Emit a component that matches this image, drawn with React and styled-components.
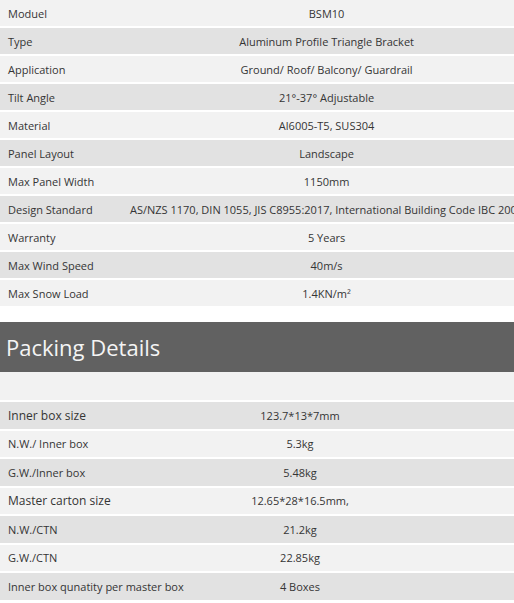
import styled, { createGlobalStyle } from "styled-components";

const GlobalStyle = createGlobalStyle`
  html, body {
    margin: 0;
    padding: 0;
    overflow: hidden;
    background: #fff;
  }
  body {
    font-family: "Open Sans", "Liberation Sans", sans-serif;
    color: #353535;
  }
`;

const specs = [
  ["Moduel", "BSM10"],
  ["Type", "Aluminum Profile Triangle Bracket"],
  ["Application", "Ground/ Roof/ Balcony/ Guardrail"],
  ["Tilt Angle", "21°-37° Adjustable"],
  ["Material", "Al6005-T5, SUS304"],
  ["Panel Layout", "Landscape"],
  ["Max Panel Width", "1150mm"],
  [
    "Design Standard",
    "AS/NZS 1170, DIN 1055, JIS C8955:2017, International Building Code IBC 2009",
  ],
  ["Warranty", "5 Years"],
  ["Max Wind Speed", "40m/s"],
  ["Max Snow Load", "1.4KN/m²"],
];

const packing = [
  { label: "Inner box size", value: "123.7*13*7mm", big: true },
  { label: "N.W./ Inner box", value: "5.3kg" },
  { label: "G.W./Inner box", value: "5.48kg" },
  { label: "Master carton size", value: "12.65*28*16.5mm,", big: true },
  { label: "N.W./CTN", value: "21.2kg" },
  { label: "G.W./CTN", value: "22.85kg" },
  { label: "Inner box qunatity per master box", value: "4 Boxes" },
];

const Page = styled.div`
  width: 514px;
`;

const Table = styled.div`
  display: grid;
  grid-template-columns: ${(p) => p.$cols};
  row-gap: 2px;
`;

const Row = styled.div`
  display: contents;
  & > * {
    background: ${(p) => (p.$shade ? "#e2e2e2" : "#f2f2f2")};
    height: ${(p) => p.$h || 26}px;
  }
`;

const Label = styled.div`
  display: flex;
  align-items: center;
  padding-left: 8px;
  font-size: ${(p) => (p.$big ? 12 : 11)}px;
  white-space: nowrap;
`;

const Value = styled.div`
  display: flex;
  align-items: center;
  justify-content: safe center;
  padding-left: ${(p) => p.$padL || 0}px;
  padding-right: ${(p) => p.$padR || 0}px;
  font-size: 11px;
  white-space: nowrap;
  overflow: visible;
`;

const Header = styled.div`
  margin-top: 16px;
  background: #616161;
  height: 50px;
  display: flex;
  align-items: center;
  padding-left: 6px;
  font-size: 22px;
  color: #f4f4f4;
`;

const Blank = styled.div`
  grid-column: 1 / -1;
  height: 28px;
  background: #f2f2f2;
`;

export default function App() {
  return (
    <Page>
      <GlobalStyle />
      <Table $cols="115px 1fr">
        {specs.map(([label, value], i) => (
          <Row key={label} $shade={i % 2 === 1}>
            <Label>{label}</Label>
            <Value $padL={15}>{value}</Value>
          </Row>
        ))}
      </Table>
      <Header>Packing Details</Header>
      <Table $cols="200px 1fr">
        <Blank />
        {packing.map((r, i) => (
          <Row key={r.label} $shade={i % 2 === 0} $h={26.5}>
            <Label $big={r.big}>{r.label}</Label>
            <Value $padR={114}>{r.value}</Value>
          </Row>
        ))}
      </Table>
    </Page>
  );
}
